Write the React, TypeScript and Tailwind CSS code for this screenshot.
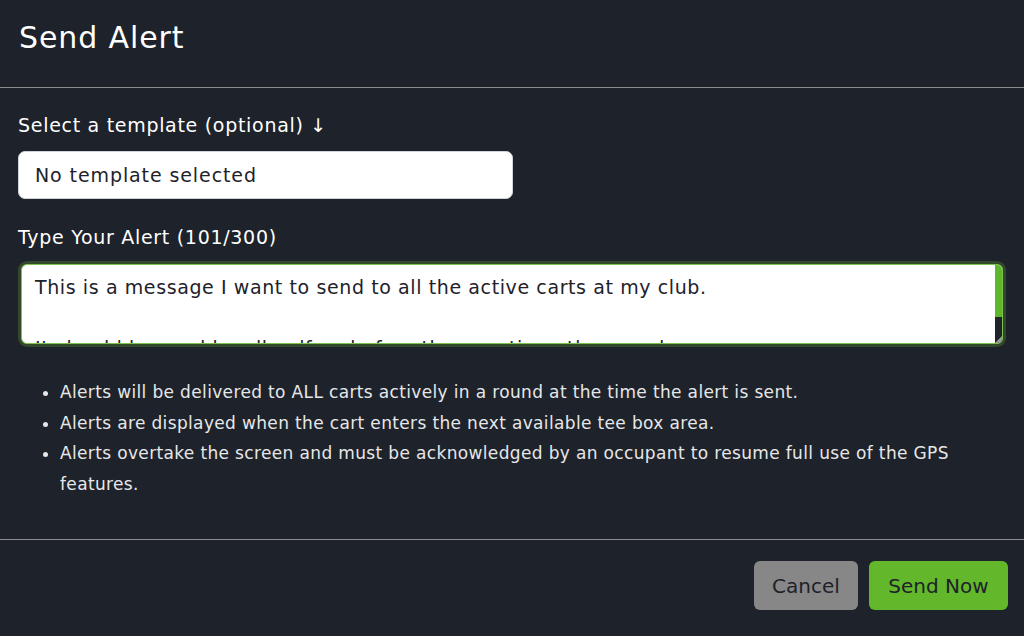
import React from "react";

export default function App() {
  const font = { fontFamily: '"DejaVu Sans", "Open Sans", sans-serif' };
  return (
    <div className="w-[1024px] h-[636px] bg-[#1e222a] text-white overflow-hidden flex flex-col" style={font}>
      <div className="h-[88px] px-[19px] flex items-start pt-[20px] border-b border-[#8a8b8d]">
        <h1 className="text-[30px] leading-[36px] tracking-[0.9px] font-normal text-white">Send Alert</h1>
      </div>
      <div className="px-[18px] pt-[25px] flex flex-col">
        <label className="text-[19px] leading-[24px] tracking-[0.7px] text-white">Select a template (optional) ↓</label>
        <div className="mt-[14px] w-[495px] h-[48px] bg-white rounded-[7px] border border-[#cfd2d6] flex items-center px-[16px] text-[19px] tracking-[0.9px] text-[#1e222a]">
          No template selected
        </div>
        <label className="mt-[26px] text-[19px] leading-[24px] tracking-[0.7px] text-white">Type Your Alert (101/300)</label>
        <div className="mt-[12px] rounded-[9px] bg-[#33492b] p-[3px]">
          <div className="relative h-[80px] bg-white rounded-[6px] border border-[#7cc04d] overflow-hidden">
            <div className="pl-[13px] pt-[9px] pr-[24px] text-[19px] leading-[27px] tracking-[0.6px] text-[#1e222a]">
              <div>This is a message I want to send to all the active carts at my club.</div>
              <div className="mt-[34px]">It should be read by all golfers before they continue the round.</div>
            </div>
            <div className="absolute right-0 top-0 bottom-0 w-[7px] flex flex-col">
              <div className="h-[52px] bg-[#5fb82b]"></div>
              <div className="flex-1 bg-[#1e222a]"></div>
            </div>
            <div className="absolute right-0 bottom-0 w-0 h-0 border-l-[7px] border-l-transparent border-b-[7px] border-b-[#9a9a9a]"></div>
          </div>
        </div>
        <ul className="mt-[30px] pl-[42px] pr-[40px] list-disc text-[17px] leading-[30.5px] tracking-[0.35px] text-[#e6e7e9]">
          <li>Alerts will be delivered to ALL carts actively in a round at the time the alert is sent.</li>
          <li>Alerts are displayed when the cart enters the next available tee box area.</li>
          <li>Alerts overtake the screen and must be acknowledged by an occupant to resume full use of the GPS features.</li>
        </ul>
      </div>
      <div className="mt-auto border-t border-[#8a8b8d] h-[97px] flex items-start justify-end gap-[11px] pt-[21px] pr-[16px]">
        <button className="w-[104px] h-[49px] rounded-[6px] bg-[#878787] text-[#1e222a] text-[20px]">Cancel</button>
        <button className="w-[139px] h-[49px] rounded-[6px] bg-[#62b82a] text-[#1e222a] text-[20px]">Send Now</button>
      </div>
    </div>
  );
}
